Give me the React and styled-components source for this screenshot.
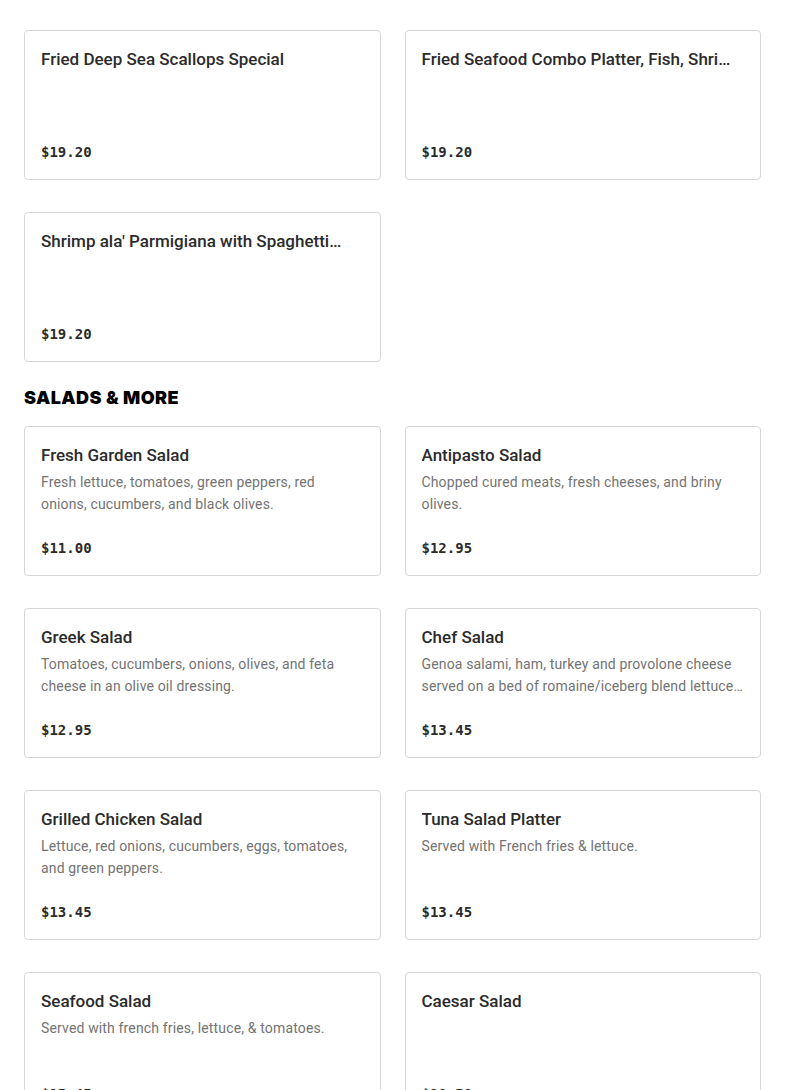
import styled, { createGlobalStyle } from "styled-components"

const GlobalStyle = createGlobalStyle`
    body {
        margin: 0;
        background: #ffffff;
        font-family: 'Roboto', 'Liberation Sans', sans-serif;
    }
`

const seafood = [
    { name: "Fried Deep Sea Scallops Special", price: "$19.20" },
    { name: "Fried Seafood Combo Platter, Fish, Shrimp, Scallops & Clams", price: "$19.20" },
    { name: "Shrimp ala' Parmigiana with Spaghetti…", price: "$19.20" },
]

const salads = [
    { name: "Fresh Garden Salad", desc: "Fresh lettuce, tomatoes, green peppers, red onions, cucumbers, and black olives.", price: "$11.00" },
    { name: "Antipasto Salad", desc: "Chopped cured meats, fresh cheeses, and briny olives.", price: "$12.95" },
    { name: "Greek Salad", desc: "Tomatoes, cucumbers, onions, olives, and feta cheese in an olive oil dressing.", price: "$12.95" },
    { name: "Chef Salad", desc: "Genoa salami, ham, turkey and provolone cheese served on a bed of romaine/iceberg blend lettuce with tomatoes, onions and cucumbers.", price: "$13.45" },
    { name: "Grilled Chicken Salad", desc: "Lettuce, red onions, cucumbers, eggs, tomatoes, and green peppers.", price: "$13.45" },
    { name: "Tuna Salad Platter", desc: "Served with French fries & lettuce.", price: "$13.45" },
    { name: "Seafood Salad", desc: "Served with french fries, lettuce, & tomatoes.", price: "$15.45" },
    { name: "Caesar Salad", desc: "", price: "$10.50" },
]

export default function App() {
    return (
        <>
            <GlobalStyle />
            <Page>
                <Grid>
                    {seafood.map((item) => <ItemCard key={item.name} {...item} />)}
                </Grid>
                <Section>
                    <Heading>SALADS &amp; MORE</Heading>
                    <Grid>
                        {salads.map((item) => <ItemCard key={item.name} {...item} />)}
                    </Grid>
                </Section>
            </Page>
        </>
    )
}

function ItemCard({ name, desc, price }) {
    return (
        <Card>
            <Title>{name}</Title>
            {desc && <Desc>{desc}</Desc>}
            <Price>{price}</Price>
        </Card>
    )
}

const Page = styled.div`
    padding: 30px 24px 0 24px;
    height: 1090px;
    overflow: hidden;
    box-sizing: border-box;
`

const Grid = styled.div`
    display: grid;
    grid-template-columns: 1fr 1fr;
    column-gap: 24px;
    row-gap: 32px;
`

const Section = styled.section`
    margin-top: 24px;
`

const Heading = styled.h2`
    margin: 0 0 16px 0;
    font-family: 'Inter', 'Liberation Sans', sans-serif;
    font-weight: 900;
    font-size: 18px;
    line-height: 24px;
    color: #000;
    letter-spacing: 0.45px;
`

const Card = styled.div`
    display: flex;
    flex-direction: column;
    height: 150px;
    box-sizing: border-box;
    padding: 16px 16px 15px 16px;
    border: 1px solid #d6d6d6;
    border-radius: 4px;
    min-width: 0;
`

const Title = styled.h3`
    margin: 0;
    font-family: 'Roboto', 'Liberation Sans', sans-serif;
    font-size: 17px;
    font-weight: 500;
    line-height: 24px;
    color: #2b2b2b;
    white-space: nowrap;
    overflow: hidden;
    text-overflow: ellipsis;
`

const Desc = styled.p`
    margin: 4px 0 0 0;
    font-size: 14px;
    line-height: 22px;
    color: #737373;
    letter-spacing: 0.15px;
    display: -webkit-box;
    -webkit-line-clamp: 2;
    -webkit-box-orient: vertical;
    overflow: hidden;
`

const Price = styled.div`
    margin-top: auto;
    font-family: 'DejaVu Sans Mono', 'Liberation Mono', monospace;
    font-weight: 700;
    font-size: 14px;
    line-height: 24px;
    color: #2b2b2b;
`
